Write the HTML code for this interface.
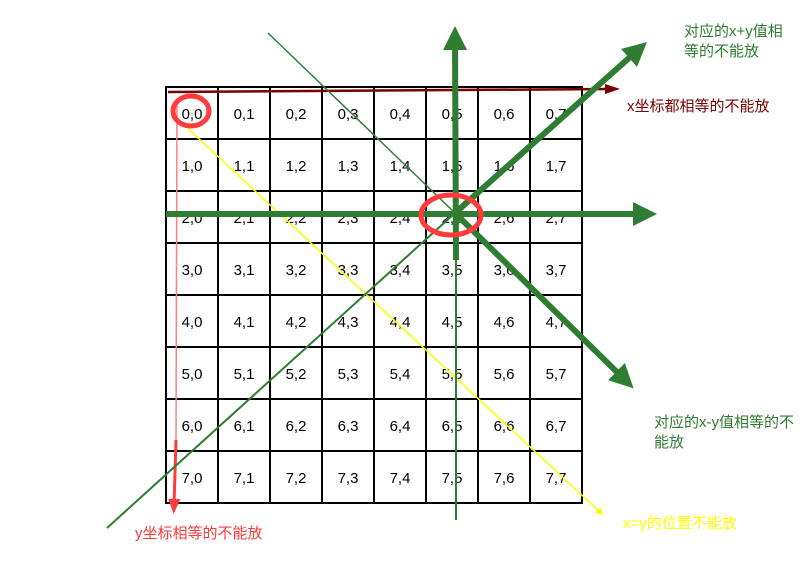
<!DOCTYPE html>
<html><head><meta charset="utf-8"><style>
body{margin:0;background:#fff;width:806px;height:565px;overflow:hidden}
svg text{font-family:"Liberation Sans","Noto Sans CJK SC",sans-serif;font-size:15px}
.c{font-size:15px;fill:#000;text-anchor:middle}
</style></head><body>
<svg width="806" height="565" viewBox="0 0 806 565" xmlns="http://www.w3.org/2000/svg">
<defs>
<marker id="g" markerWidth="4" markerHeight="4" refX="2" refY="2" orient="auto" markerUnits="strokeWidth"><path d="M0,0L4,2L0,4z" fill="#2e7d32"/></marker>
<marker id="r" markerWidth="5" markerHeight="4" refX="2" refY="2" orient="auto" markerUnits="strokeWidth"><path d="M0,0L5,2L0,4z" fill="#ff3b3b"/></marker>
<marker id="d" markerWidth="6" markerHeight="4" refX="2" refY="2" orient="auto" markerUnits="strokeWidth"><path d="M0,0L6,2L0,4z" fill="#7b0000"/></marker>
<marker id="y" markerWidth="5" markerHeight="5" refX="2" refY="2.5" orient="auto" markerUnits="strokeWidth"><path d="M0,0L5,2.5L0,5z" fill="#ffff00"/></marker>
</defs>
<g stroke="#000" stroke-width="2">
<rect x="166" y="87" width="416" height="416" fill="none"/>
<line x1="218" y1="87" x2="218" y2="503"/><line x1="270" y1="87" x2="270" y2="503"/><line x1="322" y1="87" x2="322" y2="503"/><line x1="374" y1="87" x2="374" y2="503"/><line x1="426" y1="87" x2="426" y2="503"/><line x1="478" y1="87" x2="478" y2="503"/><line x1="530" y1="87" x2="530" y2="503"/>
<line x1="166" y1="139" x2="582" y2="139"/><line x1="166" y1="191" x2="582" y2="191"/><line x1="166" y1="243" x2="582" y2="243"/><line x1="166" y1="295" x2="582" y2="295"/><line x1="166" y1="347" x2="582" y2="347"/><line x1="166" y1="399" x2="582" y2="399"/><line x1="166" y1="451" x2="582" y2="451"/>
</g>
<g class="c">
<text x="192" y="119" class="c">0,0</text><text x="244" y="119" class="c">0,1</text><text x="296" y="119" class="c">0,2</text><text x="348" y="119" class="c">0,3</text><text x="400" y="119" class="c">0,4</text><text x="452" y="119" class="c">0,5</text><text x="504" y="119" class="c">0,6</text><text x="556" y="119" class="c">0,7</text>
<text x="192" y="171" class="c">1,0</text><text x="244" y="171" class="c">1,1</text><text x="296" y="171" class="c">1,2</text><text x="348" y="171" class="c">1,3</text><text x="400" y="171" class="c">1,4</text><text x="452" y="171" class="c">1,5</text><text x="504" y="171" class="c">1,6</text><text x="556" y="171" class="c">1,7</text>
<text x="192" y="223" class="c">2,0</text><text x="244" y="223" class="c">2,1</text><text x="296" y="223" class="c">2,2</text><text x="348" y="223" class="c">2,3</text><text x="400" y="223" class="c">2,4</text><text x="452" y="223" class="c">2,5</text><text x="504" y="223" class="c">2,6</text><text x="556" y="223" class="c">2,7</text>
<text x="192" y="275" class="c">3,0</text><text x="244" y="275" class="c">3,1</text><text x="296" y="275" class="c">3,2</text><text x="348" y="275" class="c">3,3</text><text x="400" y="275" class="c">3,4</text><text x="452" y="275" class="c">3,5</text><text x="504" y="275" class="c">3,6</text><text x="556" y="275" class="c">3,7</text>
<text x="192" y="327" class="c">4,0</text><text x="244" y="327" class="c">4,1</text><text x="296" y="327" class="c">4,2</text><text x="348" y="327" class="c">4,3</text><text x="400" y="327" class="c">4,4</text><text x="452" y="327" class="c">4,5</text><text x="504" y="327" class="c">4,6</text><text x="556" y="327" class="c">4,7</text>
<text x="192" y="379" class="c">5,0</text><text x="244" y="379" class="c">5,1</text><text x="296" y="379" class="c">5,2</text><text x="348" y="379" class="c">5,3</text><text x="400" y="379" class="c">5,4</text><text x="452" y="379" class="c">5,5</text><text x="504" y="379" class="c">5,6</text><text x="556" y="379" class="c">5,7</text>
<text x="192" y="431" class="c">6,0</text><text x="244" y="431" class="c">6,1</text><text x="296" y="431" class="c">6,2</text><text x="348" y="431" class="c">6,3</text><text x="400" y="431" class="c">6,4</text><text x="452" y="431" class="c">6,5</text><text x="504" y="431" class="c">6,6</text><text x="556" y="431" class="c">6,7</text>
<text x="192" y="483" class="c">7,0</text><text x="244" y="483" class="c">7,1</text><text x="296" y="483" class="c">7,2</text><text x="348" y="483" class="c">7,3</text><text x="400" y="483" class="c">7,4</text><text x="452" y="483" class="c">7,5</text><text x="504" y="483" class="c">7,6</text><text x="556" y="483" class="c">7,7</text>
</g>
<line x1="177" y1="100" x2="176" y2="440" stroke="#ff8080" stroke-width="1.5"/>
<line x1="176" y1="440" x2="174" y2="505" stroke="#ff3b3b" stroke-width="3" marker-end="url(#r)"/>
<line x1="168" y1="92" x2="610" y2="89" stroke="#7b0000" stroke-width="2.5" marker-end="url(#d)"/>
<line x1="182" y1="123" x2="600" y2="512" stroke="#ffff00" stroke-width="1.5" marker-end="url(#y)"/>
<line x1="268" y1="33" x2="455" y2="213" stroke="#2e7d32" stroke-width="1.5"/>
<line x1="455" y1="213" x2="625" y2="380" stroke="#2e7d32" stroke-width="6" marker-end="url(#g)"/>
<line x1="107" y1="528" x2="455" y2="213" stroke="#2e7d32" stroke-width="2"/>
<line x1="455" y1="213" x2="638" y2="50" stroke="#2e7d32" stroke-width="6" marker-end="url(#g)"/>
<line x1="456" y1="520" x2="456" y2="260" stroke="#2e7d32" stroke-width="2"/>
<line x1="456" y1="260" x2="455" y2="38" stroke="#2e7d32" stroke-width="6" marker-end="url(#g)"/>
<line x1="166" y1="214" x2="645" y2="214" stroke="#2e7d32" stroke-width="6" marker-end="url(#g)"/>
<ellipse cx="191" cy="111" rx="18" ry="15" fill="none" stroke="#ff3b3b" stroke-width="5"/>
<ellipse cx="451" cy="215" rx="30" ry="20" fill="none" stroke="#ff3b3b" stroke-width="5"/>
<text x="684" y="36" fill="#2e7d32">对应的x+y值相</text>
<text x="684" y="56" fill="#2e7d32">等的不能放</text>
<text x="627" y="111" fill="#7b0000">x坐标都相等的不能放</text>
<text x="654" y="427" fill="#2e7d32">对应的x-y值相等的不</text>
<text x="654" y="447" fill="#2e7d32">能放</text>
<text x="135" y="538" fill="#ff3b3b">y坐标相等的不能放</text>
<text x="623" y="528" fill="#ffff00">x=y的位置不能放</text>
</svg>
</body></html>
